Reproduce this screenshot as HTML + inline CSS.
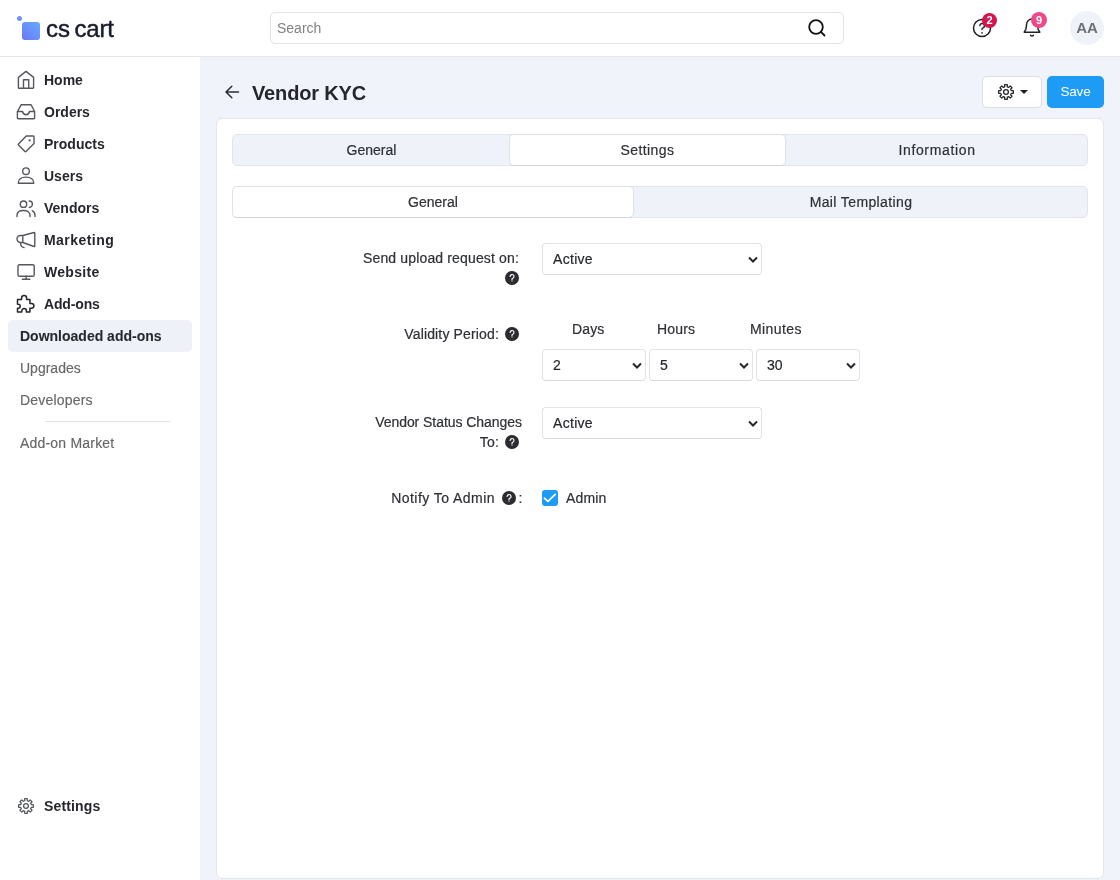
<!DOCTYPE html>
<html><head><meta charset="utf-8">
<style>
*{box-sizing:border-box;margin:0;padding:0}
html,body{width:1120px;height:880px;overflow:hidden;background:#fff;font-family:"Liberation Sans",sans-serif;color:#2b2d31}
#wrap{position:absolute;left:0;top:0;width:1120px;height:880px;will-change:transform;background:#fff}
.abs{position:absolute}
#header{position:absolute;left:0;top:0;width:1120px;height:57px;background:#fff;border-bottom:1px solid #e3e6ed}
#side{position:absolute;left:0;top:57px;width:200px;height:823px;background:#fff}
#main{position:absolute;left:200px;top:57px;width:920px;height:823px;background:#f0f3f9}
.nav{position:absolute;left:0;height:32px;width:200px;font-size:14px;font-weight:bold;color:#25272c}
.nav svg{position:absolute;left:16px;top:6px}
.nav span{position:absolute;left:44px;top:8px;line-height:16px}
.sub{position:absolute;left:20px;font-size:14px;color:#666769;line-height:16px;-webkit-text-stroke:.15px #666769}
.card{position:absolute;left:216px;top:118px;width:888px;height:761px;background:#fff;border:1px solid #e2e5ec;border-radius:6px}
.tabs{position:absolute;left:232px;width:856px;height:32px;background:#eff2f8;border:1px solid #e2e5eb;border-radius:5px}
.tab{position:absolute;top:-1px;height:32px;font-size:14px;color:#2e3035;-webkit-text-stroke:.2px #2e3035;text-align:center;line-height:32px}
.tab.act{background:#fff;border:1px solid #dde1e8;border-bottom-color:#cfd4dc;border-radius:5px;line-height:30px}
.lbl{position:absolute;font-size:14px;color:#2e3035;-webkit-text-stroke:.2px #2e3035;text-align:right;line-height:20px;letter-spacing:.15px;white-space:nowrap}
.sel{position:absolute;height:32px;background:#fff;border:1px solid #e1e3e7;border-bottom-color:#d8dade;border-radius:4px;font-size:14px;color:#25272c}
.sel span{position:absolute;left:10px;top:7px;line-height:16px;-webkit-text-stroke:.2px #25272c}
.sel svg{position:absolute;right:3px;top:12px}
.help{position:absolute;width:14px;height:14px;border-radius:50%;background:#2b2c2f;color:#fff;font-size:10px;text-align:center;line-height:14px;font-weight:bold}
</style></head><body><div id="wrap">
<div id="header">
  <!-- logo -->
  <div class="abs" style="left:17px;top:16px;width:5px;height:5px;border-radius:50%;background:#6d95f5"></div>
  <div class="abs" style="left:22px;top:22px;width:18px;height:18px;border-radius:3px;background:linear-gradient(45deg,#6b78f4,#65aaff)"></div>
  <div class="abs" style="left:46px;top:15px;font-size:24px;line-height:28px;color:#161a2c;-webkit-text-stroke:.45px #161a2c;transform:scaleY(1.02);transform-origin:0 22px">cs</div><div class="abs" style="left:74.5px;top:15px;font-size:24px;line-height:28px;color:#161a2c;-webkit-text-stroke:.45px #161a2c;transform:scaleY(1.02);transform-origin:0 22px;letter-spacing:-.2px">cart</div>
  <!-- search -->
  <div class="abs" style="left:270px;top:12px;width:574px;height:32px;border:1px solid #e1e3e8;border-radius:5px;background:#fff">
    <span class="abs" style="left:6px;top:7px;font-size:14px;line-height:16px;color:#808184">Search</span>
    <svg class="abs" style="left:536px;top:5px" width="20" height="20" viewBox="0 0 20 20"><circle cx="9" cy="9" r="6.8" fill="none" stroke="#111214" stroke-width="1.8"/><line x1="13.9" y1="13.9" x2="17.5" y2="17.5" stroke="#111214" stroke-width="1.8" stroke-linecap="round"/></svg>
  </div>
  <!-- help -->
  <svg class="abs" style="left:972px;top:18px" width="20" height="20" viewBox="0 0 20 20"><circle cx="10" cy="10" r="8.5" fill="none" stroke="#1f2125" stroke-width="1.5"/><path d="M7.8 7.8a2.3 2.3 0 1 1 3.2 2.1c-.6.3-1 .7-1 1.3v.4" fill="none" stroke="#1f2125" stroke-width="1.35" stroke-linecap="round"/><circle cx="10" cy="14.8" r=".85" fill="#1f2125"/></svg>
  <div class="abs" style="left:982px;top:12.5px;width:15px;height:15px;border-radius:50%;background:#d8134e;color:#fff;font-size:11px;font-weight:bold;text-align:center;line-height:15px">2</div>
  <!-- bell -->
  <svg class="abs" style="left:1022px;top:17px" width="20" height="22" viewBox="0 0 20 22"><path d="M2.2 15.2H17.8L16.3 12.6C15.7 11.2 15.5 9.8 15.5 7.6A5.5 5.5 0 0 0 4.5 7.6C4.5 9.8 4.3 11.2 3.7 12.6Z" fill="none" stroke="#1f2125" stroke-width="1.5" stroke-linejoin="round"/><path d="M8.6 18.4q1.4 1 2.8 0" fill="none" stroke="#1f2125" stroke-width="1.5" stroke-linecap="round"/></svg>
  <div class="abs" style="left:1031px;top:12.3px;width:16px;height:16px;border-radius:50%;background:#ee4a8a;color:#fff;font-size:11px;font-weight:bold;text-align:center;line-height:16px">9</div>
  <!-- avatar -->
  <div class="abs" style="left:1070px;top:11px;width:34px;height:34px;border-radius:50%;background:#eff2f8;color:#6e6f72;font-size:15px;font-weight:bold;text-align:center;line-height:34px">AA</div>
</div>

<div id="side">
  <div class="nav" style="top:7px"><svg width="20" height="20" viewBox="0 0 20 20"><path d="M3.2 18.2a.8.8 0 0 1-.8-.8V7.4L10 1.4l7.6 6v10a.8.8 0 0 1-.8.8z M7.5 18.2V9.7h5.2v8.5" fill="none" stroke="#55575c" stroke-width="1.4" stroke-linejoin="round"/></svg><span>Home</span></div>
  <div class="nav" style="top:39px"><svg width="20" height="20" viewBox="0 0 20 20"><path d="M1.4 9.5L5.2 2.8h9.9l3.5 6.7v6.5a.8.8 0 0 1-.8.8H2.2a.8.8 0 0 1-.8-.8z M1.4 9.5H6.5c.5 2 1.8 3.2 3.5 3.2s3-1.2 3.5-3.2h5.1" fill="none" stroke="#55575c" stroke-width="1.4" stroke-linejoin="round"/></svg><span>Orders</span></div>
  <div class="nav" style="top:71px"><svg width="20" height="20" viewBox="0 0 20 20"><path d="M10.2 2H17.4a.6.6 0 0 1 .6.6V9.5L10 17.5a.7.7 0 0 1-1 0L2.5 11a.7.7 0 0 1 0-1z" fill="none" stroke="#55575c" stroke-width="1.4" stroke-linejoin="round"/><circle cx="13.6" cy="6.4" r="1.1" fill="#55575c"/></svg><span>Products</span></div>
  <div class="nav" style="top:103px"><svg width="20" height="20" viewBox="0 0 20 20"><circle cx="10" cy="5.2" r="3.3" fill="none" stroke="#55575c" stroke-width="1.4"/><path d="M2.2 17.3c0-3.5 2.8-6.2 7.8-6.2s7.8 2.7 7.8 6.2z" fill="none" stroke="#55575c" stroke-width="1.4" stroke-linejoin="round"/></svg><span>Users</span></div>
  <div class="nav" style="top:135px"><svg width="20" height="20" viewBox="0 0 20 20"><circle cx="7.5" cy="6.2" r="3.2" fill="none" stroke="#55575c" stroke-width="1.4"/><path d="M1 18.5v-1.2c0-2.8 2.5-4.8 6.5-4.8s6.5 2 6.5 4.8v1.2 M13.2 3a3.2 3.2 0 0 1 0 6.4 M16.3 12.8c1.6.7 2.7 2.2 2.7 4.3v1.4" fill="none" stroke="#55575c" stroke-width="1.4" stroke-linecap="round"/></svg><span>Vendors</span></div>
  <div class="nav" style="top:167px"><svg width="20" height="20" viewBox="0 0 20 20"><path d="M6.8 5.5L18 2.5a.6.6 0 0 1 .8.6V15.9a.6.6 0 0 1-.8.6L6.8 12.5z M6.8 5.5H4.5a3.5 3.5 0 0 0 0 7H6.8 M4.6 12.6c-.2 2.6 1 4.4 3.4 4.9" fill="none" stroke="#55575c" stroke-width="1.4" stroke-linejoin="round" stroke-linecap="round"/></svg><span style="letter-spacing:.45px">Marketing</span></div>
  <div class="nav" style="top:199px"><svg width="20" height="20" viewBox="0 0 20 20"><rect x="2" y="2.7" width="16.2" height="11.6" rx="1.6" fill="none" stroke="#55575c" stroke-width="1.4"/><path d="M10.1 14.3v3 M6.3 17.3h7.6" fill="none" stroke="#55575c" stroke-width="1.4" stroke-linecap="round"/></svg><span style="letter-spacing:.3px">Website</span></div>
  <div class="nav" style="top:231px"><svg width="20" height="20" viewBox="0 0 20 20"><path d="M1.5 5.6H5.6V4a2.5 2.5 0 0 1 5 0V5.6H13.9V9.4H15.5a2.4 2.4 0 0 1 0 4.8H13.9V17.9H10.4V16.9a2.3 2.3 0 0 0-4.6 0V17.9H1.5V14.3H2.2a2 2 0 0 0 0-4H1.5z" fill="none" stroke="#25272c" stroke-width="1.5" stroke-linejoin="round"/></svg><span style="letter-spacing:-.15px">Add-ons</span></div>
  <div class="abs" style="left:8px;top:263px;width:184px;height:32px;border-radius:5px;background:#eef1f7"></div>
  <div class="sub" style="top:271px;font-weight:bold;color:#25272c">Downloaded add-ons</div>
  <div class="sub" style="top:303px">Upgrades</div>
  <div class="sub" style="top:335px;letter-spacing:.2px">Developers</div>
  <div class="abs" style="left:45px;top:364px;width:125px;height:1px;background:#dfe2e8"></div>
  <div class="sub" style="top:378px;letter-spacing:.2px">Add-on Market</div>
  <div class="nav" style="top:733px"><svg width="20" height="20" viewBox="0 0 20 20"><path d="M8.70 4.76L8.70 2.72 A7.40 7.40 0 0 1 11.30 2.72 L11.30 4.76A5.40 5.40 0 0 1 12.79 5.37L14.23 3.93 A7.40 7.40 0 0 1 16.07 5.77 L14.63 7.21A5.40 5.40 0 0 1 15.24 8.70L17.28 8.70 A7.40 7.40 0 0 1 17.28 11.30 L15.24 11.30A5.40 5.40 0 0 1 14.63 12.79L16.07 14.23 A7.40 7.40 0 0 1 14.23 16.07 L12.79 14.63A5.40 5.40 0 0 1 11.30 15.24L11.30 17.28 A7.40 7.40 0 0 1 8.70 17.28 L8.70 15.24A5.40 5.40 0 0 1 7.21 14.63L5.77 16.07 A7.40 7.40 0 0 1 3.93 14.23 L5.37 12.79A5.40 5.40 0 0 1 4.76 11.30L2.72 11.30 A7.40 7.40 0 0 1 2.72 8.70 L4.76 8.70A5.40 5.40 0 0 1 5.37 7.21L3.93 5.77 A7.40 7.40 0 0 1 5.77 3.93 L7.21 5.37A5.40 5.40 0 0 1 8.70 4.76Z" fill="none" stroke="#55575c" stroke-width="1.25" stroke-linejoin="round"/><circle cx="10" cy="10" r="2.4" fill="none" stroke="#55575c" stroke-width="1.25"/></svg><span style="letter-spacing:.15px">Settings</span></div>
</div>

<div id="main"></div>

<!-- page title -->
<svg class="abs" style="left:224px;top:84px" width="16" height="16" viewBox="0 0 16 16"><path d="M14.5 8H2 M7.8 2.2L2 8l5.8 5.8" fill="none" stroke="#2b2d31" stroke-width="1.5" stroke-linecap="round" stroke-linejoin="round"/></svg>
<div class="abs" style="left:252px;top:80.5px;font-size:20px;font-weight:bold;line-height:24px;color:#25272c;letter-spacing:-.15px">Vendor KYC</div>

<!-- gear button -->
<div class="abs" style="left:982px;top:76px;width:60px;height:32px;background:#fff;border:1px solid #dde0e6;border-radius:5px">
  <svg class="abs" style="left:13px;top:5px" width="20" height="20" viewBox="0 0 20 20"><path d="M8.70 4.76L8.70 2.72 A7.40 7.40 0 0 1 11.30 2.72 L11.30 4.76A5.40 5.40 0 0 1 12.79 5.37L14.23 3.93 A7.40 7.40 0 0 1 16.07 5.77 L14.63 7.21A5.40 5.40 0 0 1 15.24 8.70L17.28 8.70 A7.40 7.40 0 0 1 17.28 11.30 L15.24 11.30A5.40 5.40 0 0 1 14.63 12.79L16.07 14.23 A7.40 7.40 0 0 1 14.23 16.07 L12.79 14.63A5.40 5.40 0 0 1 11.30 15.24L11.30 17.28 A7.40 7.40 0 0 1 8.70 17.28 L8.70 15.24A5.40 5.40 0 0 1 7.21 14.63L5.77 16.07 A7.40 7.40 0 0 1 3.93 14.23 L5.37 12.79A5.40 5.40 0 0 1 4.76 11.30L2.72 11.30 A7.40 7.40 0 0 1 2.72 8.70 L4.76 8.70A5.40 5.40 0 0 1 5.37 7.21L3.93 5.77 A7.40 7.40 0 0 1 5.77 3.93 L7.21 5.37A5.40 5.40 0 0 1 8.70 4.76Z" fill="none" stroke="#26282c" stroke-width="1.3" stroke-linejoin="round"/><circle cx="10" cy="10" r="2.4" fill="none" stroke="#26282c" stroke-width="1.3"/></svg>
  <div class="abs" style="left:37px;top:13px;width:0;height:0;border-left:4px solid transparent;border-right:4px solid transparent;border-top:4px solid #1f2125"></div>
</div>
<!-- save -->
<div class="abs" style="left:1047px;top:76px;width:57px;height:32px;background:#1e9bf5;border-radius:5px;color:#fff;font-size:13.5px;text-align:center;line-height:32px;letter-spacing:-.2px">Save</div>

<div class="card"></div>

<!-- tabs row 1 -->
<div class="tabs" style="top:134px">
  <div class="tab" style="left:0;width:277px">General</div>
  <div class="tab act" style="left:276px;width:277px;letter-spacing:.4px">Settings</div>
  <div class="tab" style="left:553px;width:302px;letter-spacing:.65px">Information</div>
</div>
<!-- tabs row 2 -->
<div class="tabs" style="top:186px">
  <div class="tab act" style="left:-1px;width:402px">General</div>
  <div class="tab" style="left:401px;width:454px;letter-spacing:.38px">Mail Templating</div>
</div>

<!-- form -->
<div class="lbl" style="left:300px;top:248px;width:219px">Send upload request on:</div>
<div class="help" style="left:505px;top:271px"><svg width="14" height="14" viewBox="0 0 14 14" style="position:absolute;left:0;top:0"><path d="M5.1 5.5a1.95 1.95 0 1 1 2.7 1.8c-.5.2-.8.5-.8 1v.4" fill="none" stroke="#fff" stroke-width="1.15" stroke-linecap="round"/><rect x="6.4" y="9.6" width="1.2" height=".9" fill="#fff"/></svg></div>
<div class="sel" style="left:542px;top:243px;width:220px"><span style="letter-spacing:.3px">Active</span><svg width="10" height="7" viewBox="0 0 10 7"><path d="M1 1.5l4 4 4-4" fill="none" stroke="#25272c" stroke-width="2"/></svg></div>

<div class="lbl" style="left:300px;top:324px;width:199px">Validity Period:</div>
<div class="help" style="left:505px;top:327px"><svg width="14" height="14" viewBox="0 0 14 14" style="position:absolute;left:0;top:0"><path d="M5.1 5.5a1.95 1.95 0 1 1 2.7 1.8c-.5.2-.8.5-.8 1v.4" fill="none" stroke="#fff" stroke-width="1.15" stroke-linecap="round"/><rect x="6.4" y="9.6" width="1.2" height=".9" fill="#fff"/></svg></div>
<div class="lbl" style="left:572px;top:319px;text-align:left">Days</div>
<div class="lbl" style="left:657px;top:319px;text-align:left">Hours</div>
<div class="lbl" style="left:750px;top:319px;text-align:left;letter-spacing:.4px">Minutes</div>
<div class="sel" style="left:542px;top:349px;width:104px"><span>2</span><svg width="10" height="7" viewBox="0 0 10 7"><path d="M1 1.5l4 4 4-4" fill="none" stroke="#25272c" stroke-width="2"/></svg></div>
<div class="sel" style="left:649px;top:349px;width:104px"><span>5</span><svg width="10" height="7" viewBox="0 0 10 7"><path d="M1 1.5l4 4 4-4" fill="none" stroke="#25272c" stroke-width="2"/></svg></div>
<div class="sel" style="left:756px;top:349px;width:104px"><span>30</span><svg width="10" height="7" viewBox="0 0 10 7"><path d="M1 1.5l4 4 4-4" fill="none" stroke="#25272c" stroke-width="2"/></svg></div>

<div class="lbl" style="left:300px;top:412px;width:222px;letter-spacing:-.05px">Vendor Status Changes</div>
<div class="lbl" style="left:300px;top:432px;width:199px">To:</div>
<div class="help" style="left:505px;top:435px"><svg width="14" height="14" viewBox="0 0 14 14" style="position:absolute;left:0;top:0"><path d="M5.1 5.5a1.95 1.95 0 1 1 2.7 1.8c-.5.2-.8.5-.8 1v.4" fill="none" stroke="#fff" stroke-width="1.15" stroke-linecap="round"/><rect x="6.4" y="9.6" width="1.2" height=".9" fill="#fff"/></svg></div>
<div class="sel" style="left:542px;top:407px;width:220px"><span style="letter-spacing:.3px">Active</span><svg width="10" height="7" viewBox="0 0 10 7"><path d="M1 1.5l4 4 4-4" fill="none" stroke="#25272c" stroke-width="2"/></svg></div>

<div class="lbl" style="left:300px;top:488px;width:195px;letter-spacing:.45px">Notify To Admin</div>
<div class="help" style="left:502px;top:491px"><svg width="14" height="14" viewBox="0 0 14 14" style="position:absolute;left:0;top:0"><path d="M5.1 5.5a1.95 1.95 0 1 1 2.7 1.8c-.5.2-.8.5-.8 1v.4" fill="none" stroke="#fff" stroke-width="1.15" stroke-linecap="round"/><rect x="6.4" y="9.6" width="1.2" height=".9" fill="#fff"/></svg></div>
<div class="lbl" style="left:518.5px;top:488px;text-align:left">:</div>
<div class="abs" style="left:542px;top:490px;width:16px;height:16px;border-radius:3px;background:#1e9bf5">
  <svg class="abs" style="left:0;top:0" width="16" height="16" viewBox="0 0 16 16"><path d="M2.4 8.2L5.9 11.4L13.2 4.3" fill="none" stroke="#fff" stroke-width="1.7" stroke-linecap="round" stroke-linejoin="round"/></svg>
</div>
<div class="lbl" style="left:566px;top:488px;text-align:left">Admin</div>
</div></body></html>
